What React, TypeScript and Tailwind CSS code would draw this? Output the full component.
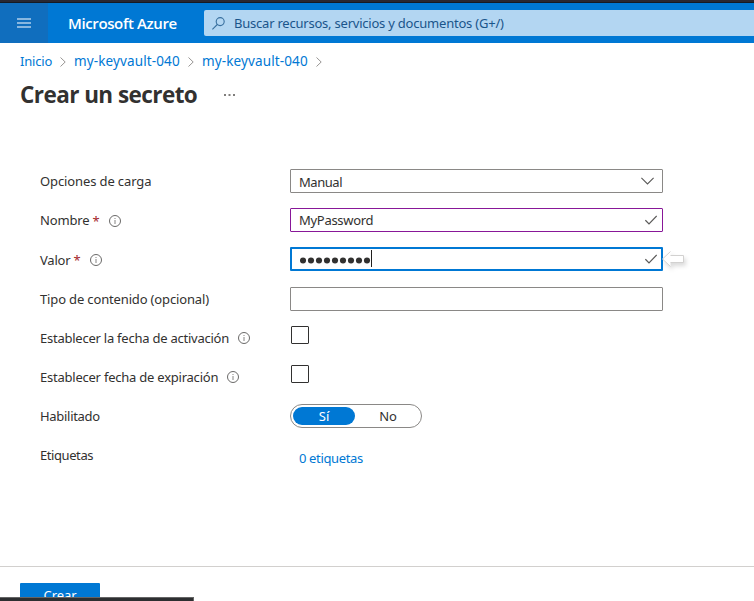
import React from "react";

function InfoIcon() {
  return (
    <svg className="shrink-0" width="12" height="12" viewBox="0 0 12 12" fill="none">
      <circle cx="6" cy="6" r="5.5" stroke="#6a6968" />
      <path d="M6 5v4M6 3v1" stroke="#858483" />
    </svg>
  );
}

function CheckIcon() {
  return (
    <svg width="12" height="10" viewBox="0 0 12 10" fill="none">
      <path d="M.4 5.2 4 8.8 11.7 1" stroke="#5a5958" strokeWidth="1.2" />
    </svg>
  );
}

function Separator() {
  return (
    <svg className="mx-[8px] mt-px shrink-0" width="6" height="10" viewBox="0 0 6 10" fill="none">
      <path d="M.5.5 5.2 5 .5 9.5" stroke="#979593" />
    </svg>
  );
}

type RowProps = {
  label: string;
  labelClass: string;
  required?: boolean;
  info?: boolean;
  children: React.ReactNode;
};

function Row({ label, labelClass, required, info, children }: RowProps) {
  return (
    <div className="flex h-[39px]">
      <div className="flex h-[39px] w-[250px] shrink-0 items-center">
        <span className={`whitespace-nowrap ${labelClass}`}>{label}</span>
        {required && <span className="ml-[3px] text-[#a4262c]">*</span>}
        {info && <span className="ml-[9px] mt-px"><InfoIcon /></span>}
      </div>
      {children}
    </div>
  );
}

export default function App() {
  return (
    <div className="relative flex h-[601px] w-[754px] flex-col overflow-hidden bg-white font-['Noto_Sans','Open_Sans',sans-serif] text-[13px] leading-[18px] text-[#323130]">
      <div className="h-[3px] shrink-0 border-b border-[#151b25] bg-[#292832]" />
      <header className="flex h-10 shrink-0 items-center bg-[#0078d4]">
        <div className="flex h-10 w-12 items-center justify-center bg-[#106ebe]">
          <svg width="14" height="10" viewBox="0 0 14 10" fill="#88b7e0">
            <path d="M0 0h14v2H0zM0 4h14v2H0zM0 8h14v2H0z" />
          </svg>
        </div>
        <span className="ml-5 w-[136px] whitespace-nowrap font-['Open_Sans','Noto_Sans',sans-serif] text-[15px] font-semibold tracking-[-0.38px] text-white">Microsoft Azure</span>
        <div className="flex h-[26px] flex-1 items-center rounded-l-[2px] bg-[#b3d6f2] pl-2 text-[#1a558b]">
          <svg width="13" height="13" viewBox="0 0 13 13" fill="none" stroke="#386f9e" strokeWidth="1.1">
            <circle cx="8.2" cy="4.6" r="4" />
            <path d="M5.3 7.5.4 12.3" />
          </svg>
          <span className="ml-[9px] whitespace-nowrap tracking-[-0.22px]">Buscar recursos, servicios y documentos (G+/)</span>
        </div>
      </header>

      <nav className="flex h-9 shrink-0 items-center pl-5 text-[#0078d4]">
        <span className="w-8 tracking-[-0.2px]">Inicio</span>
        <Separator />
        <span className="w-[106px] whitespace-nowrap text-[13.5px] tracking-[0.12px]">my-keyvault-040</span>
        <Separator />
        <span className="w-[106px] whitespace-nowrap text-[13.5px] tracking-[0.12px]">my-keyvault-040</span>
        <Separator />
      </nav>

      <div className="flex h-[31px] shrink-0 items-center pl-5">
        <h1 className="w-[204px] whitespace-nowrap pt-px font-['Open_Sans','Noto_Sans',sans-serif] text-[22.5px] font-bold leading-[30px] tracking-[-0.56px]">Crear un secreto</h1>
        <svg width="11" height="2" viewBox="0 0 11 2" fill="#807e7c">
          <path d="M0 0h2v2H0zM4.5 0h2v2h-2zM9 0h2v2H9z" />
        </svg>
      </div>

      <main className="flex h-[456px] shrink-0 flex-col pl-10 pt-[52px]">
        <Row label="Opciones de carga" labelClass="pb-0.5 tracking-[-0.12px]">
          <div className="mt-[7px] flex h-6 w-[373px] items-center justify-between rounded-[1px] border border-[#8a8886] pl-2 pr-[8px]">
            <span className="mt-px tracking-[-0.45px]">Manual</span>
            <svg width="13" height="8" viewBox="0 0 13 8" fill="none">
              <path d="m.4.8 6.1 6.1L12.6.8" stroke="#5a5958" strokeWidth="1.1" />
            </svg>
          </div>
        </Row>
        <Row label="Nombre" labelClass="pb-0.5 tracking-[-0.15px]" required info>
          <div className="mt-[7px] flex h-6 w-[373px] items-center justify-between rounded-[1px] border border-[#881798] pl-2 pr-[5px]">
            <span className="tracking-[-0.3px]">MyPassword</span>
            <CheckIcon />
          </div>
        </Row>
        <Row label="Valor" labelClass="tracking-[-0.2px]" required info>
          <div className="relative mt-[7px] flex h-6 w-[373px] items-center justify-between rounded-[1px] border-2 border-[#0078d4] pl-[8px] pr-[4px]">
            <div className="flex items-center">
              <svg className="mt-[3px]" width="71" height="7" viewBox="0 0 71 7" fill="#323130">
                {[0, 1, 2, 3, 4, 5, 6, 7, 8].map((i) => (
                  <circle key={i} cx={3 + i * 8} cy="3.5" r="3.05" />
                ))}
              </svg>
              <span className="mb-px h-[17px] w-px bg-[#201f1e]" />
            </div>
            <CheckIcon />
            <svg className="absolute left-[370px] top-0 overflow-visible drop-shadow-[2px_3px_2px_rgba(0,0,0,0.14)]" width="24" height="20" viewBox="0 0 24 20">
              <path d="M.5 10 8.5 2.5V6.5H21.5V13.5H8.5V17.5Z" fill="white" />
              <path d="M8.5 2.5.5 10l8 7.5M8.5 6.5h13v7h-13" fill="none" stroke="#d2d1d0" />
            </svg>
          </div>
        </Row>
        <Row label="Tipo de contenido (opcional)" labelClass="tracking-[-0.15px]">
          <div className="mt-[8px] h-6 w-[373px] rounded-[1px] border border-[#8a8886]" />
        </Row>
        <Row label="Establecer la fecha de activación" labelClass="tracking-[-0.24px]" info>
          <div className="ml-px mt-[8px] size-[18px] rounded-[1px] border border-[#323130]" />
        </Row>
        <Row label="Establecer fecha de expiración" labelClass="tracking-[-0.23px]" info>
          <div className="ml-px mt-[8px] size-[18px] rounded-[1px] border border-[#323130]" />
        </Row>
        <Row label="Habilitado" labelClass="tracking-[-0.3px]">
          <div className="mt-[8px] flex h-6 w-[132px] items-center rounded-full border border-[#8a8886] pl-[2px]">
            <span className="flex h-[18px] w-[62px] items-center justify-center rounded-full bg-[#0078d4] text-white">Sí</span>
            <span className="flex w-[66px] justify-center">No</span>
          </div>
        </Row>
        <Row label="Etiquetas" labelClass="tracking-[-0.42px]">
          <span className="ml-[9px] mt-[14px] tracking-[-0.36px] text-[#0078d4]">0 etiquetas</span>
        </Row>
      </main>

      <footer className="h-[35px] shrink-0 border-t border-[#d2d0ce] pl-5 pt-4">
        <button className="h-6 w-20 rounded-[1px] bg-[#0078d4] text-center tracking-[-0.1px] text-white">Crear</button>
      </footer>
      <div className="absolute bottom-0 left-0 h-1 w-[194px] border-r border-t border-[#656565] bg-[#2d2f31]" />
    </div>
  );
}
